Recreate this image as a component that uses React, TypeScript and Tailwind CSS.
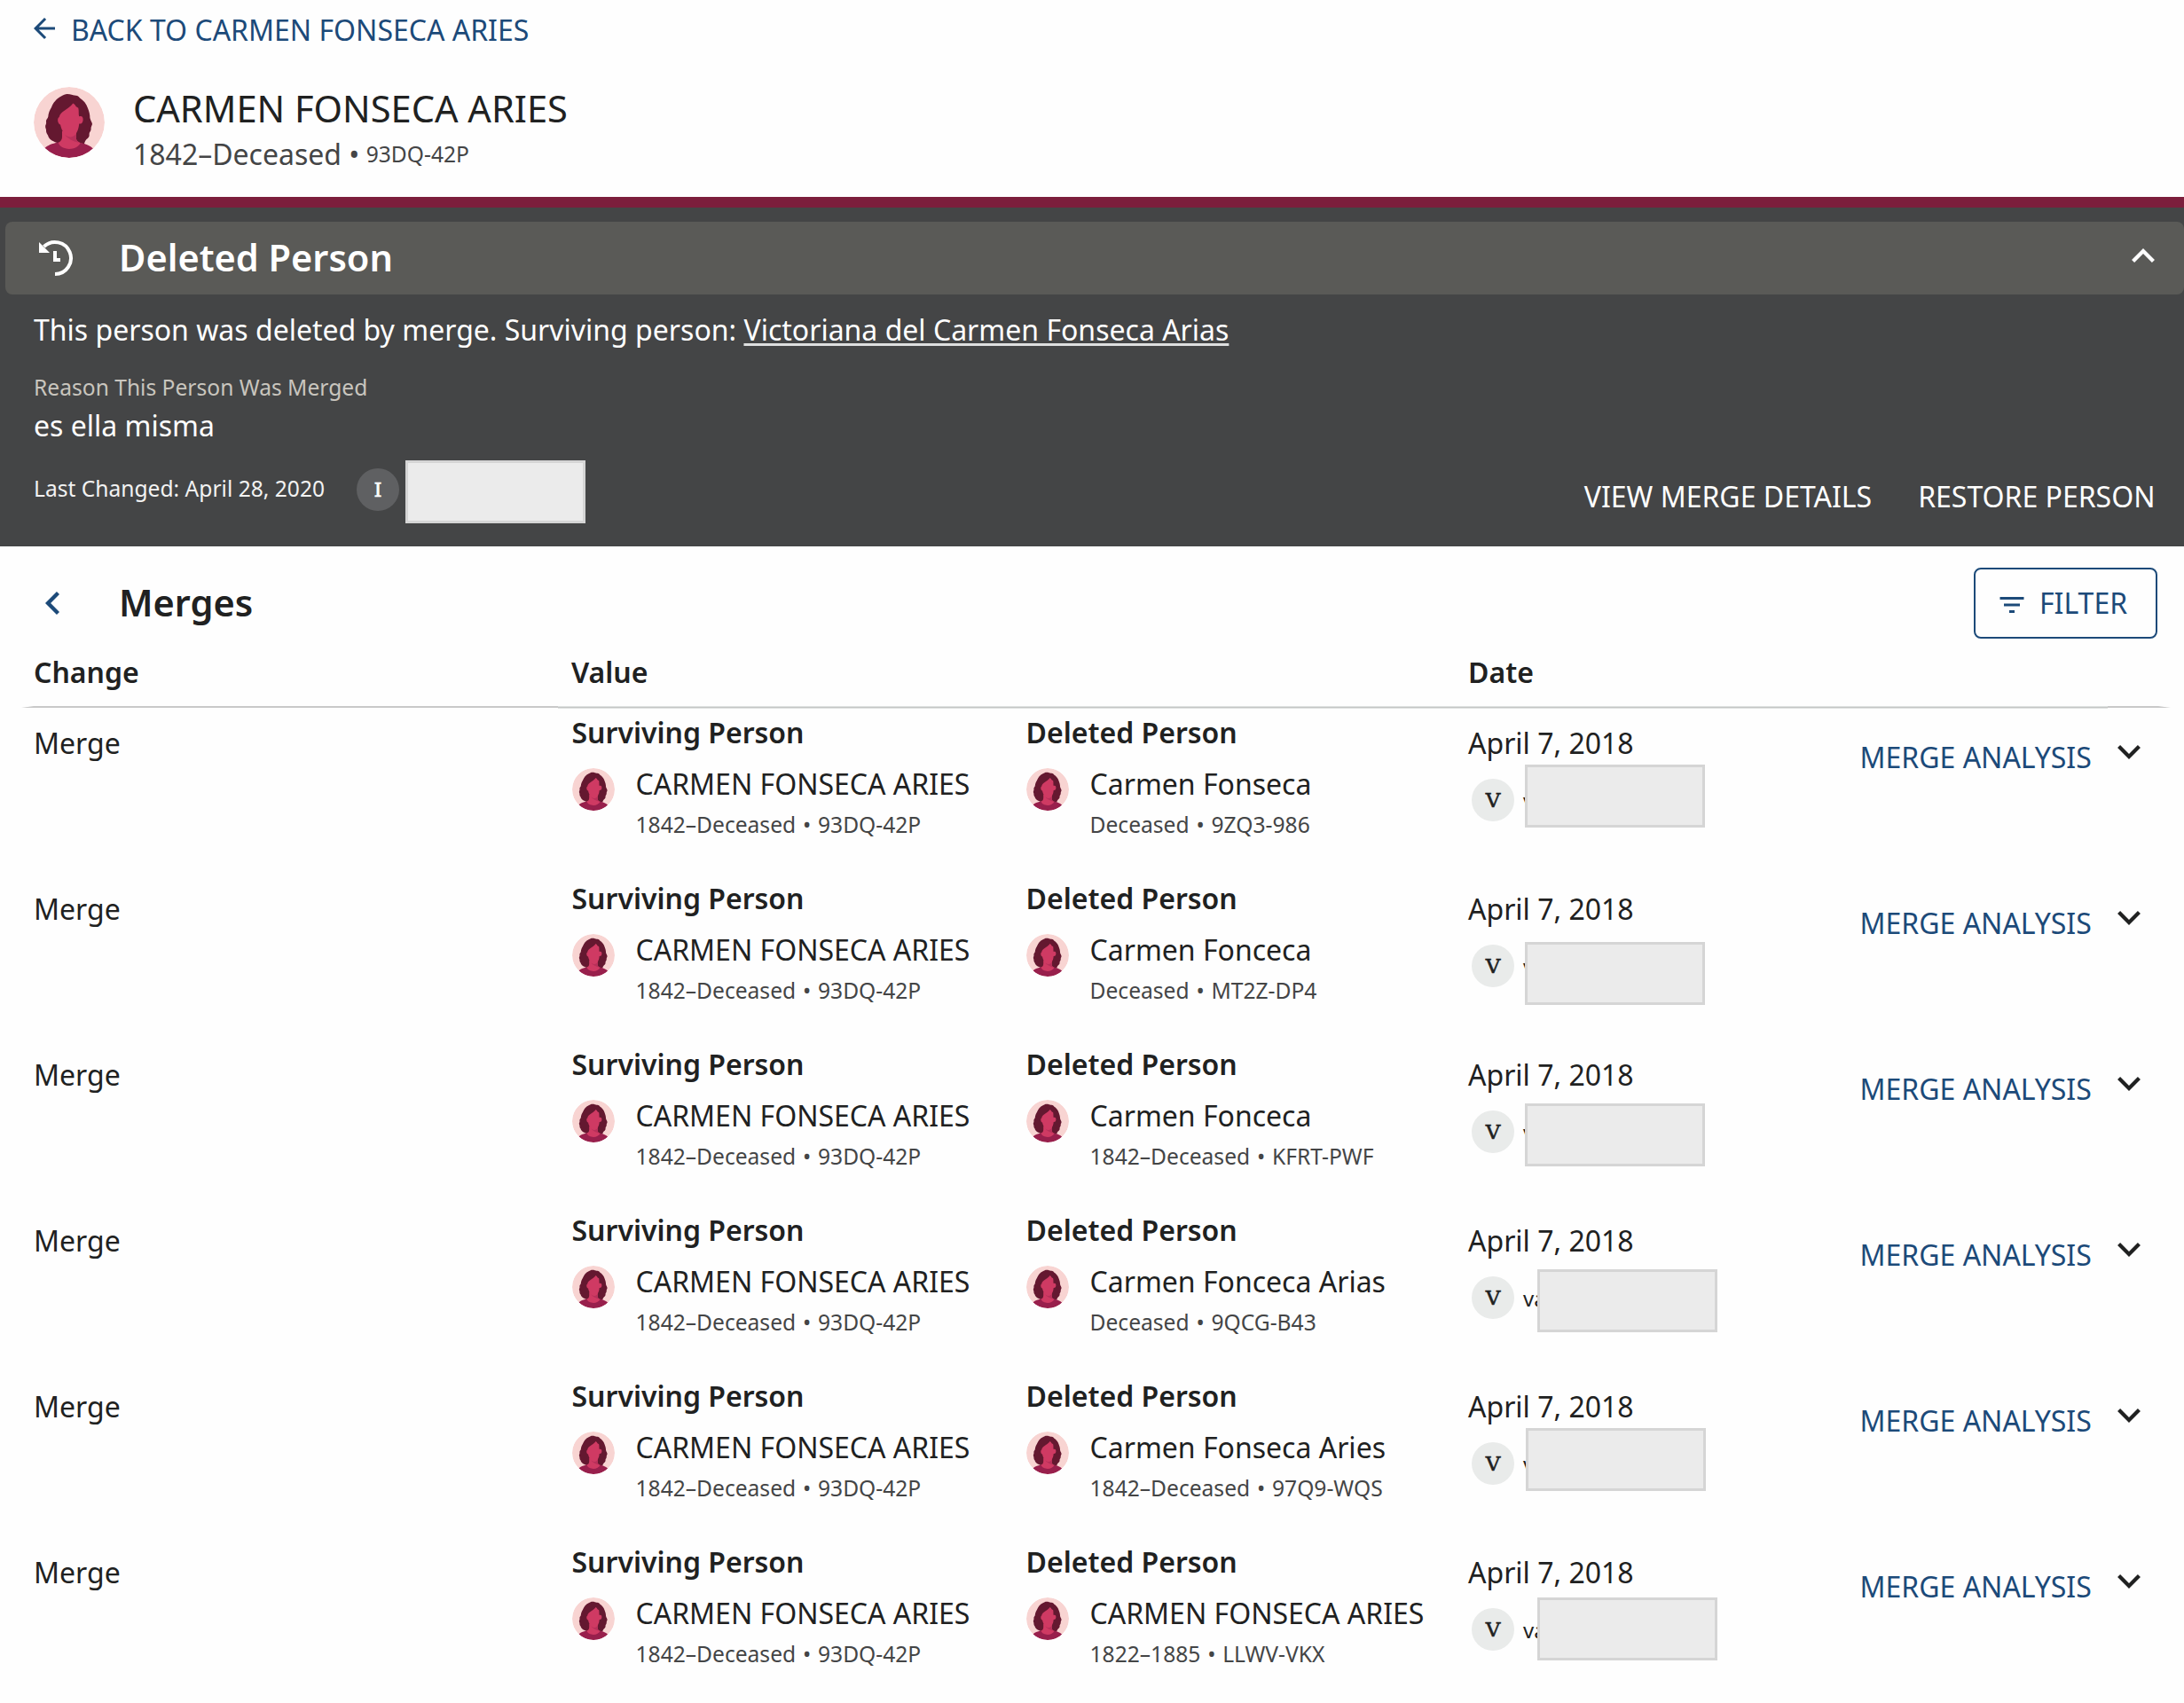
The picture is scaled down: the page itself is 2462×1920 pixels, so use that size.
import { MdArrowBack, MdFilterList } from 'react-icons/md';

interface Person {
  name: string;
  dates: string;
  id: string;
}

interface MergeRow {
  deleted: Person;
  // where the cover over the contributor name sits, relative to the initial badge
  cover: string;
}

const survivor: Person = { name: 'CARMEN FONSECA ARIES', dates: '1842–Deceased', id: '93DQ-42P' };

const merges: MergeRow[] = [
  { deleted: { name: 'Carmen Fonseca', dates: 'Deceased', id: '9ZQ3-986' }, cover: 'left-[60px] -top-[16px]' },
  { deleted: { name: 'Carmen Fonceca', dates: 'Deceased', id: 'MT2Z-DP4' }, cover: 'left-[60px] -top-[3px]' },
  { deleted: { name: 'Carmen Fonceca', dates: '1842–Deceased', id: 'KFRT-PWF' }, cover: 'left-[60px] -top-[8px]' },
  { deleted: { name: 'Carmen Fonceca Arias', dates: 'Deceased', id: '9QCG-B43' }, cover: 'left-[74px] -top-[8px]' },
  { deleted: { name: 'Carmen Fonseca Aries', dates: '1842–Deceased', id: '97Q9-WQS' }, cover: 'left-[61px] -top-[16px]' },
  { deleted: { name: 'CARMEN FONSECA ARIES', dates: '1822–1885', id: 'LLWV-VKX' }, cover: 'left-[74px] -top-[12px]' },
];

function Avatar({ className }: { className: string }) {
  return (
    <svg viewBox="0 0 80 80" className={`shrink-0 rounded-full ${className}`}>
      <circle cx="40" cy="40" r="40" fill="#f8d4d2" />
      <path
        d="M37.7 8C42 8 44 9.3 46 9.6C48 9.7 50.5 10 52 12.5C56 15 59.5 19 61 24C62.5 28 63.5 31 63.4 35C64 38 66 40 66 42C65.5 44 64.4 45 64.6 47C65 49.5 62.6 51 62.6 53C63 56.5 61.5 57.5 59.5 59C58 60.5 57.5 62.5 57 64H28.7C22 61.5 18 59.5 16.5 56C16.5 54 14.3 53 14 50C14.5 47.5 12.6 46 13.2 43.5C14.5 41.5 14 40 14 38C14.5 36 16 35.5 16.3 33.5C16.5 30 18 26 20 23C22 17.5 26 13 31 10.5C33.5 9 35.5 8 37.7 8Z"
        fill="#641830"
      />
      <path d="M32 50H48V59C49 61.5 52 63 54.7 63.5L48 74H32L25.5 63.3C30 62.5 32 60 32 56Z" fill="#cf3a63" />
      <path d="M35 53.5C39 57 44 57 48 53V59C49 61.5 50.5 62.5 51.5 63C44 61.5 38 58 35 53.5Z" fill="#b8305a" />
      <path
        d="M44.3 18.5C46 19.5 47 20.5 47.6 22L50.3 23.7C51.2 27.5 50.3 30.5 51.2 33.3C54.2 32 56 34 55.6 37.5C55.2 41 53 42 51.2 41.5C50.7 48.5 47.5 56 41.5 56.5C35 56 31.5 49.5 30 42.5C27 41.5 26 35.5 28.7 34C30 27 39 26 44.3 18.5Z"
        fill="#cf3a63"
      />
      <path
        d="M12.5 69C16 66 20 64 27.7 62.6C30 72 49 72.5 52.5 63C59 64 63.5 66.5 67 69.5A40 40 0 0 1 12.5 69Z"
        fill="#981f4c"
      />
    </svg>
  );
}

function HistoryIcon() {
  return (
    <svg viewBox="0 0 40 42" className="h-[42px] w-10 shrink-0" fill="none">
      <path d="M19 39A18 18 0 1 0 6.5 8" stroke="#fff" strokeWidth="4" />
      <path d="M1 3V15H13Z" fill="#fff" />
      <path d="M17 13V25H25V21H21V13Z" fill="#fff" />
    </svg>
  );
}

function Chevron({ className }: { className: string }) {
  return (
    <svg viewBox="0 0 12 7.41" className={`h-4 w-[26px] shrink-0 ${className}`} fill="currentColor">
      <path d="M6 7.41L12 1.41L10.59 0L6 4.58L1.41 0L0 1.41Z" />
    </svg>
  );
}

function NameCover({ className }: { className: string }) {
  return <div className={`absolute h-[71px] w-[203px] border-[3px] border-[#d5d5d5] bg-[#ebebeb] ${className}`} />;
}

function PersonCell({ label, person }: { label: string; person: Person }) {
  return (
    <div className="w-[512px] shrink-0 pt-[7px]">
      <div className="pl-[0.5px] font-semibold leading-[40px]">{label}</div>
      <div className="mt-[17px] flex pl-px">
        <Avatar className="mt-[3px] size-12" />
        <div className="ml-[23.5px] whitespace-nowrap">
          <div className="mt-px leading-[40px]">{person.name}</div>
          <div className="mt-2 text-[24.6px] leading-[36px] text-[#444546]">
            {person.dates} <span className="mx-[1.4px]">•</span> {person.id}
          </div>
        </div>
      </div>
    </div>
  );
}

export default function App() {
  return (
    <div className="h-[1920px] w-[2462px] overflow-hidden bg-[#fefefe] font-['Noto_Sans',sans-serif] text-[32px] text-[#202121]">
      {/* Page header */}
      <header className="h-[222px] pt-[14px]">
        <a className="flex h-10 items-center whitespace-nowrap text-[#1c4a79]">
          <MdArrowBack className="mb-1 ml-8 size-9" />
          <span className="ml-3 leading-[40px]">BACK TO CARMEN FONSECA ARIES</span>
        </a>
        <div className="mt-10 flex pl-[38px]">
          <Avatar className="mt-1 size-20" />
          <div className="ml-8">
            <h1 className="text-[41.6px] leading-[56px]">CARMEN FONSECA ARIES</h1>
            <div className="mt-0.5 leading-[44px] text-[#444546]">
              1842–Deceased • <span className="relative -top-[3px] -left-px text-[24.6px]">93DQ-42P</span>
            </div>
          </div>
        </div>
      </header>

      {/* Deleted banner */}
      <section className="h-[394px] border-t-[12px] border-[#7c1e3c] bg-[#444546] text-white">
        <div className="ml-1.5 mt-4 flex h-[82px] items-center rounded-lg bg-[#5a5a57] pl-[37px] pr-[33px]">
          <HistoryIcon />
          <h2 className="mb-0.5 ml-[51px] text-[41.5px] font-semibold leading-[56px]">Deleted Person</h2>
          <Chevron className="mb-1.5 ml-auto rotate-180" />
        </div>
        <div className="px-[38px]">
          <p className="mt-5 leading-[40px]">
            This person was deleted by merge. Surviving person:{' '}
            <a className="underline decoration-[#dedfdf] decoration-[3px] underline-offset-[3px]">
              Victoriana del Carmen Fonseca Arias
            </a>
          </p>
          <div className="mt-[27px] text-[24.6px] leading-[36px] text-[#c9c5be]">Reason This Person Was Merged</div>
          <div className="mt-[5px] leading-[40px]">es ella misma</div>
          <div className="flex">
            <div className="mt-[33px] text-[24.6px] leading-[36px] text-[#f2f2f2]">Last Changed: April 28, 2020</div>
            <div className="relative ml-9 mt-[28px] flex size-12 items-center justify-center rounded-full bg-[#5f6062] font-['DejaVu_Serif',serif] text-[23px] [-webkit-text-stroke:0.6px]">
              I
              <NameCover className="left-[55px] -top-[9px]" />
            </div>
            <div className="-mr-[5.5px] ml-auto mt-10 flex gap-[52px] leading-[40px]">
              <button>VIEW MERGE DETAILS</button>
              <button>RESTORE PERSON</button>
            </div>
          </div>
        </div>
      </section>

      {/* Merges title row */}
      <div className="flex h-[104px] items-end pl-[46px] pr-[30px]">
        <Chevron className="mb-8 rotate-90 text-[#1c4a79]" />
        <h2 className="mb-[13px] ml-[62px] text-[41.5px] font-semibold leading-[56px]">Merges</h2>
        <button className="ml-auto flex h-20 w-[207px] items-center rounded-lg border-2 border-[#1c4a79] pl-[23px] text-[#1c4a79]">
          <MdFilterList className="mt-1 size-9" />
          <span className="ml-[13px] leading-[40px]">FILTER</span>
        </button>
      </div>

      {/* Column heads */}
      <div className="flex h-[76px] pl-[38px] pt-[18px] font-semibold leading-[40px]">
        <div className="w-[606px]">Change</div>
        <div className="w-[1011px]">Value</div>
        <div>Date</div>
      </div>
      <div className="ml-6 mr-[15px] flex h-[3px] items-start">
        <div className="w-[605px] border-b-2 border-l-[14px] border-[#c9c9c9] border-l-transparent" />
        <div className="h-[3px] flex-1 border-y border-[#dfe2e1] bg-[#c4c6c5]" />
        <div className="w-[71px] border-b-2 border-r-[14px] border-[#c9c9c9] border-r-transparent" />
      </div>

      {/* Merge history */}
      {merges.map((row, i) => (
        <div key={i} className="flex h-[187px] pl-[38px]">
          <div className="w-[606px] pt-[19px] leading-[40px]">Merge</div>
          <PersonCell label="Surviving Person" person={survivor} />
          <PersonCell label="Deleted Person" person={row.deleted} />
          <div className="-ml-[13px] w-[441.5px] pt-[19px]">
            <div className="leading-[40px]">April 7, 2018</div>
            <div className="relative ml-1 mt-5 flex h-12 items-center">
              <div className="flex size-12 items-center justify-center rounded-full bg-[#e9ebea] font-['DejaVu_Serif',serif] text-[23px] [-webkit-text-stroke:0.6px]">
                V
              </div>
              <span className="ml-2.5 mt-0.5 text-2xl leading-[36px]">va</span>
              <NameCover className={row.cover} />
            </div>
          </div>
          <button className="mt-[35px] h-10 text-[#1c4a79] leading-[40px]">MERGE ANALYSIS</button>
          <Chevron className="ml-[29.5px] mt-[41px]" />
        </div>
      ))}
    </div>
  );
}
